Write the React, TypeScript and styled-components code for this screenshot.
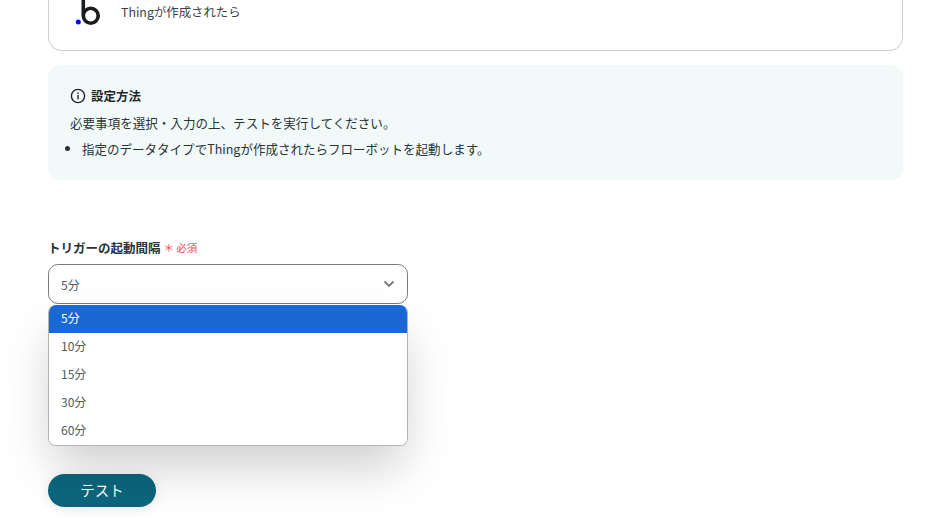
import React from "react";
import styled, { createGlobalStyle } from "styled-components";

const Global = createGlobalStyle`
  html, body { margin: 0; padding: 0; background: #fff; }
  body { font-family: "Noto Sans CJK JP", "Noto Sans", sans-serif; color: #283237; }
  #root { width: 925px; height: 525px; overflow: hidden; }
`;

const Page = styled.div`
  width: 925px;
  height: 525px;
  padding: 0 22px 0 48px;
  box-sizing: border-box;
  display: flex;
  flex-direction: column;
  overflow: hidden;
`;

const AppCard = styled.div`
  height: 51px;
  flex: none;
  box-sizing: border-box;
  border: 1px solid #cfcfcf;
  border-top: none;
  border-radius: 0 0 14px 14px;
  display: flex;
  align-items: flex-start;
  padding-left: 26px;
  gap: 20px;
`;

const Logo = styled.svg`
  width: 26px;
  height: 27px;
  flex: none;
`;

const AppText = styled.span`
  font-size: 12.4px;
  line-height: 24px;
  color: #3a4347;
`;

const Note = styled.section`
  margin-top: 14px;
  height: 115px;
  flex: none;
  box-sizing: border-box;
  background: #f2faf9;
  border-radius: 12px;
  padding: 21px 22px;
`;

const NoteTitle = styled.div`
  display: flex;
  align-items: center;
  gap: 5px;
  font-size: 12.5px;
  font-weight: 700;
  line-height: 20px;
  color: #1f282c;
`;

const NoteText = styled.p`
  margin: 7px 0 0;
  font-size: 12.55px;
  line-height: 20px;
  color: #283237;
`;

const NoteList = styled.ul`
  margin: 6px 0 0;
  padding: 0 0 0 12px;
  font-size: 12.53px;
  line-height: 20px;
  color: #283237;
`;

const Field = styled.div`
  margin-top: 57px;
  width: 360px;
  position: relative;
  flex: none;
`;

const Label = styled.div`
  display: flex;
  align-items: center;
  gap: 3px;
  height: 20px;
  font-size: 12.5px;
  font-weight: 700;
  color: #283237;
`;

const Required = styled.span`
  font-size: 10.5px;
  font-weight: 400;
  color: #f04a5a;
`;

const Select = styled.div`
  margin-top: 7px;
  height: 40px;
  box-sizing: border-box;
  border: 1px solid #7a7a7a;
  border-radius: 10px;
  background: #fff;
  display: flex;
  align-items: center;
  justify-content: space-between;
  padding: 0 12px;
  font-size: 12px;
  color: #4f5a5f;
`;

const Menu = styled.ul`
  position: absolute;
  left: 0;
  right: 0;
  top: 68px;
  margin: 0;
  padding: 0;
  list-style: none;
  background: #fff;
  border: 1px solid #b4b4b4;
  border-top: none;
  border-radius: 8px;
  overflow: hidden;
  box-sizing: border-box;
  box-shadow: 0 25px 50px -5px rgba(0, 0, 0, 0.2);
`;

const Option = styled.li<{ $active?: boolean }>`
  height: 28px;
  box-sizing: border-box;
  display: flex;
  align-items: center;
  padding: 0 0 3px 12px;
  font-size: 12px;
  background: ${(p) => (p.$active ? "#1a68d4" : "#fff")};
  color: ${(p) => (p.$active ? "#fff" : "#4f5a5f")};
`;

const TestButton = styled.button`
  margin-top: 170px;
  width: 108px;
  height: 33px;
  flex: none;
  border: none;
  border-radius: 17px;
  background: #0b667d;
  color: #fff;
  font-family: inherit;
  font-size: 14.5px;
  padding: 0 0 3px;
  box-shadow: 0 2px 12px rgba(0, 0, 0, 0.1);
`;

const options = ["5分", "10分", "15分", "30分", "60分"];

export default function App() {
  return (
    <>
      <Global />
      <Page>
        <AppCard>
          <Logo viewBox="0 0 26 27">
            <circle cx="3.3" cy="22" r="2.5" fill="#0a0ae6" />
            <path
              d="M8.3 0 V15.75 a7.45 7.45 0 1 0 14.9 0 a7.45 7.45 0 1 0 -14.9 0"
              fill="none"
              stroke="#1a1d20"
              strokeWidth="3.6"
            />
          </Logo>
          <AppText>Thingが作成されたら</AppText>
        </AppCard>
        <Note>
          <NoteTitle>
            <svg width="16" height="16" viewBox="0 0 16 16" fill="none">
              <circle cx="8" cy="8" r="6.6" stroke="#1f282c" strokeWidth="1.4" />
              <rect x="7.3" y="7" width="1.4" height="4.4" fill="#1f282c" />
              <rect x="7.3" y="4.5" width="1.4" height="1.5" fill="#1f282c" />
            </svg>
            設定方法
          </NoteTitle>
          <NoteText>必要事項を選択・入力の上、テストを実行してください。</NoteText>
          <NoteList>
            <li>指定のデータタイプでThingが作成されたらフローボットを起動します。</li>
          </NoteList>
        </Note>
        <Field>
          <Label>
            トリガーの起動間隔
            <Required>＊ 必須</Required>
          </Label>
          <Select>
            5分
            <svg width="12" height="8" viewBox="0 0 12 8" fill="none">
              <path d="M1.5 1.5 L6 6 L10.5 1.5" stroke="#777" strokeWidth="1.8" />
            </svg>
          </Select>
          <Menu>
            {options.map((o, i) => (
              <Option key={o} $active={i === 0}>
                {o}
              </Option>
            ))}
          </Menu>
        </Field>
        <TestButton>テスト</TestButton>
      </Page>
    </>
  );
}
